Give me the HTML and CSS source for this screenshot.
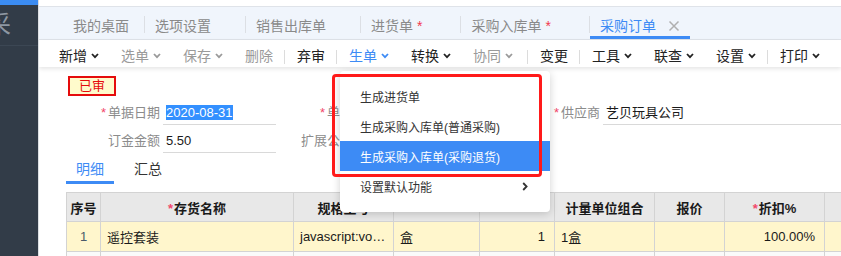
FILE: index.html
```html
<!DOCTYPE html>
<html lang="zh-CN">
<head>
  <meta charset="UTF-8">
  <title>采购订单</title>
  <link rel="stylesheet" href="styles.css">
</head>
<body>

  <div class="app">
    <!-- Left nav (collapsed) -->
    <aside class="sidebar">
      <div class="side-top"></div>
      <div class="side-logo"><span>采</span></div>
    </aside>

    <main class="main">
      <!-- Open page tabs -->
      <div class="tabbar">
        <div class="tab tab-home">我的桌面</div>
        <i class="tab-sep"></i>
        <div class="tab">选项设置<span class="tab-close"></span></div>
        <i class="tab-sep"></i>
        <div class="tab">销售出库单<span class="tab-close"></span></div>
        <i class="tab-sep"></i>
        <div class="tab">进货单<span class="dirty">*</span><span class="tab-close"></span></div>
        <i class="tab-sep"></i>
        <div class="tab">采购入库单<span class="dirty">*</span><span class="tab-close"></span></div>
        <i class="tab-sep"></i>
        <div class="tab active">采购订单<span class="tab-close">
          <svg width="12" height="12" viewBox="0 0 12 12"><path d="M1.5 1.5 L10.5 10.5 M10.5 1.5 L1.5 10.5" stroke="#b0b0b0" stroke-width="1.5" fill="none"/></svg>
        </span></div>
      </div>

      <!-- Toolbar -->
      <div class="toolbar">
        <div class="tool">新增<svg class="caret" viewBox="0 0 8 6"><path d="M1 1 L4 4.2 L7 1"/></svg></div>
        <div class="tool muted">选单<svg class="caret" viewBox="0 0 8 6"><path d="M1 1 L4 4.2 L7 1"/></svg></div>
        <div class="tool muted">保存<svg class="caret" viewBox="0 0 8 6"><path d="M1 1 L4 4.2 L7 1"/></svg></div>
        <div class="tool muted">删除</div>
        <i class="tool-sep"></i>
        <div class="tool">弃审</div>
        <i class="tool-sep"></i>
        <div class="tool current">生单<svg class="caret" viewBox="0 0 8 6"><path d="M1 1 L4 4.2 L7 1"/></svg></div>
        <div class="tool">转换<svg class="caret" viewBox="0 0 8 6"><path d="M1 1 L4 4.2 L7 1"/></svg></div>
        <div class="tool muted wide">协同<svg class="caret" viewBox="0 0 8 6"><path d="M1 1 L4 4.2 L7 1"/></svg></div>
        <i class="tool-sep"></i>
        <div class="tool">变更</div>
        <i class="tool-sep"></i>
        <div class="tool">工具<svg class="caret" viewBox="0 0 8 6"><path d="M1 1 L4 4.2 L7 1"/></svg></div>
        <div class="tool">联查<svg class="caret" viewBox="0 0 8 6"><path d="M1 1 L4 4.2 L7 1"/></svg></div>
        <div class="tool">设置<svg class="caret" viewBox="0 0 8 6"><path d="M1 1 L4 4.2 L7 1"/></svg></div>
        <i class="tool-sep"></i>
        <div class="tool">打印<svg class="caret" viewBox="0 0 8 6"><path d="M1 1 L4 4.2 L7 1"/></svg></div>
      </div>

      <div class="content">
        <div class="stamp">已审</div>

        <!-- Header fields -->
        <div class="form">
          <div class="label"><span class="req">*</span>单据日期</div>
          <div class="value"><span class="selected">2020-08-31</span></div>
          <div class="label"><span class="req">*</span>单号</div>
          <div class="value"></div>
          <div class="label"><span class="req">*</span>供应商</div>
          <div class="value">艺贝玩具公司</div>

          <div class="label">订金金额</div>
          <div class="value">5.50</div>
          <div class="label">扩展公式</div>
          <div class="value"></div>
          <div class="label"></div>
          <div class="blank"></div>
        </div>

        <div class="subtabs">
          <div class="subtab active">明细</div>
          <div class="subtab">汇总</div>
        </div>

        <!-- Detail grid -->
        <table class="grid">
          <colgroup>
            <col style="width: 34px"><col style="width: 193px"><col style="width: 100px">
            <col style="width: 86px"><col style="width: 75px"><col style="width: 100px">
            <col style="width: 70px"><col style="width: 100px"><col style="width: 80px">
          </colgroup>
          <thead>
            <tr>
              <th class="seq">序号</th>
              <th><span class="req">*</span>存货名称</th>
              <th>规格型号</th>
              <th></th>
              <th></th>
              <th>计量单位组合</th>
              <th>报价</th>
              <th><span class="req">*</span>折扣%</th>
              <th></th>
            </tr>
          </thead>
          <tbody>
            <tr class="current-row">
              <td class="seq">1</td>
              <td>遥控套装</td>
              <td>javascript:void(0)</td>
              <td>盒</td>
              <td class="num">1</td>
              <td>1盒</td>
              <td></td>
              <td class="num">100.00%</td>
              <td></td>
            </tr>
            <tr>
              <td></td><td></td><td></td><td></td><td></td><td></td><td></td><td></td><td></td>
            </tr>
          </tbody>
        </table>
      </div>

      <!-- 生单 menu -->
      <div class="dropdown">
        <div class="menu-item">生成进货单</div>
        <div class="menu-item">生成采购入库单(普通采购)</div>
        <div class="menu-item hover">生成采购入库单(采购退货)</div>
        <div class="menu-item">设置默认功能
          <svg class="more" viewBox="0 0 6 9"><path d="M1.2 1 L4.6 4.5 L1.2 8"/></svg>
        </div>
      </div>
      <div class="callout"></div>
    </main>
  </div>

</body>
</html>
```

FILE: styles.css
```css
/* Global */
body {
  margin: 0;
  font-family: "Liberation Sans", "Noto Sans CJK SC", sans-serif;
  color: #333;
  background: #fff;
  overflow: hidden;
}

.app {
  display: flex;
  height: 256px;
}

/* Sidebar */
.sidebar {
  width: 38px;
  flex: none;
  background-color: #323c48;
  overflow: hidden;
}

.side-top {
  height: 5px;
  background-color: #3b8cf3;
}

.side-logo {
  height: 40px;
  border-bottom: 1px solid #3c4754;
  line-height: 40px;
  font-size: 24px;
  color: #8e97a2;
  white-space: nowrap;
}

.side-logo span {
  display: inline-block;
  margin-left: -13px;
}

/* Main area */
.main {
  flex: 1;
  min-width: 0;
  position: relative;
  border-left: 1px solid #dcdfe3;
  overflow: hidden;
}

/* Page tabs */
.tabbar {
  display: flex;
  height: 32px;
  margin-top: 6px;
  padding-left: 19px;
  background-color: #f0f5fc;
  border-top: 1px solid #dfe3e9;
  border-bottom: 1px solid #dfe3e9;
}

.tab {
  display: flex;
  align-items: flex-start;
  padding: 9px 10px 0 10px;
  font-size: 14px;
  line-height: 20px;
  color: #8a8a8a;
  border-bottom: 3px solid transparent;
  white-space: nowrap;
}

.tab-home {
  padding: 9px 15px 0 15px;
}

.tab.active {
  color: #3d8bf5;
  border-bottom-color: #3d8bf5;
}

.dirty {
  color: #f2384f;
  margin: 0 4px;
}

.tab-close {
  width: 12px;
  height: 20px;
  margin-left: 12px;
  display: flex;
  align-items: center;
}

.tab-sep {
  width: 1px;
  height: 17px;
  margin-top: 9px;
  background-color: #dcdfe4;
}

/* Toolbar */
.toolbar {
  display: flex;
  align-items: flex-start;
  height: 27px;
  box-sizing: border-box;
  padding: 6px 0 0 9px;
  box-shadow: 0 2px 4px rgba(0, 0, 0, 0.1);
  font-size: 14px;
  line-height: 20px;
  white-space: nowrap;
}

.tool {
  display: flex;
  align-items: center;
  gap: 4px;
  padding: 0 11px;
  color: #222;
}

.tool.wide {
  padding-right: 14px;
}

.tool.muted {
  color: #9a9a9a;
}

.tool.current {
  color: #3d8bf5;
}

.caret {
  width: 8px;
  height: 6px;
  fill: none;
  stroke: currentColor;
  stroke-width: 1.8;
}

.tool-sep {
  width: 1px;
  height: 14px;
  margin: 4px 1px 0 0;
  background-color: #dcdcdc;
}

/* Content */
.content {
  padding-left: 27px;
}

.stamp {
  width: 48px;
  height: 20px;
  box-sizing: border-box;
  margin: 9px 0 0 2px;
  border: 2px solid #e50c0c;
  background-color: #fffbcc;
  color: #e50c0c;
  font-size: 13px;
  line-height: 16px;
  text-align: center;
}

.form {
  display: grid;
  grid-template-columns: 97px 113px 80px 167px 80px 1fr;
  margin-top: 1px;
  font-size: 13px;
  line-height: 20px;
}

.form .label {
  height: 28px;
  box-sizing: border-box;
  padding: 6px 3px 0 0;
  text-align: right;
  color: #8c8c8c;
  white-space: nowrap;
}

.form .value {
  height: 28px;
  box-sizing: border-box;
  padding: 6px 3px 0 3px;
  border-bottom: 1px solid #d9d9d9;
  color: #1a1a1a;
  white-space: nowrap;
}

.req {
  color: #f2476b;
  margin-right: 2px;
}

.selected {
  background-color: #3390ff;
  color: #fff;
}

/* Detail / summary tabs */
.subtabs {
  display: flex;
  gap: 10px;
}

.subtab {
  padding: 6px 10px 2px;
  font-size: 14px;
  line-height: 20px;
  color: #333;
  border-bottom: 3px solid transparent;
}

.subtab.active {
  color: #3d8bf5;
  border-bottom-color: #3d8bf5;
}

/* Grid */
.grid {
  margin-top: 8px;
  border-collapse: collapse;
  table-layout: fixed;
  width: 838px;
  font-size: 13px;
}

.grid th,
.grid td {
  border: 1px solid #d3d3d3;
  padding: 0 6px;
  white-space: nowrap;
  overflow: hidden;
  text-overflow: ellipsis;
}

.grid th {
  height: 28px;
  background-color: #e8e8e8;
  color: #1a1a1a;
  font-weight: bold;
  text-align: center;
}

.grid th.seq {
  padding: 0;
  text-overflow: clip;
}

.grid th .req {
  margin-right: 1px;
}

.grid td {
  height: 29px;
  color: #1a1a1a;
  background-color: #fafafa;
}

.grid .current-row td {
  background-color: #fff6cc;
}

.grid td.seq {
  text-align: center;
  color: #4a5a6a;
}

.grid td.num {
  text-align: right;
  padding-right: 9px;
}

/* Dropdown menu of 生单 */
.dropdown {
  position: absolute;
  left: 301px;
  top: 71px;
  width: 210px;
  padding: 10px 0 11px;
  background-color: #fff;
  border-radius: 4px;
  box-shadow: 0 2px 8px rgba(0, 0, 0, 0.18);
  font-size: 12px;
}

.menu-item {
  display: flex;
  justify-content: space-between;
  align-items: center;
  height: 30px;
  padding: 0 22px 0 20px;
  color: #333;
  white-space: nowrap;
}

.menu-item.hover {
  background-color: #3d8bf5;
  color: #fff;
}

.more {
  width: 6px;
  height: 9px;
  fill: none;
  stroke: #333;
  stroke-width: 1.8;
}

/* Red annotation frame */
.callout {
  position: absolute;
  left: 293px;
  top: 74px;
  width: 210px;
  height: 103px;
  box-sizing: border-box;
  border: 3px solid #ff1a1a;
  border-radius: 4px;
}
```
